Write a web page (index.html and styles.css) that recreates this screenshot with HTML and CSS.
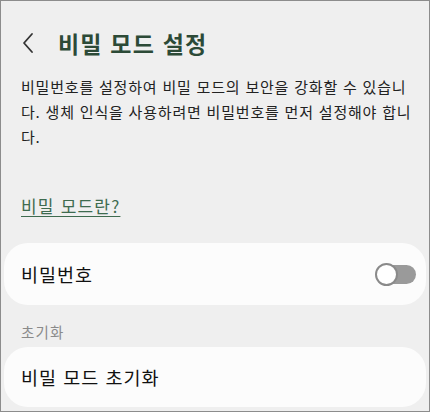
FILE: index.html
```html
<!DOCTYPE html>
<html lang="ko">
<head>
  <meta charset="UTF-8" />
  <title>비밀 모드 설정</title>
  <link rel="stylesheet" href="styles.css">
</head>
<body>
  <div class="screen">
    <!-- Header -->
    <div class="header">
      <svg class="back" width="14" height="22" viewBox="0 0 14 22">
        <path d="M11 2 L3 11 L11 20" fill="none" stroke="#333" stroke-width="1.8" stroke-linecap="round" stroke-linejoin="round" />
      </svg>
      <h1 class="title">비밀 모드 설정</h1>
    </div>

    <p class="desc">비밀번호를 설정하여 비밀 모드의 보안을 강화할 수 있습니다. 생체 인식을 사용하려면 비밀번호를 먼저 설정해야 합니다.</p>

    <a class="link" href="#">비밀 모드란?</a>

    <div class="card">
      <span class="cardText">비밀번호</span>
      <div class="toggle"><div class="knob"></div></div>
    </div>

    <div class="sectionLabel">초기화</div>

    <div class="card last">
      <span class="cardText">비밀 모드 초기화</span>
    </div>
  </div>
</body>
</html>
```

FILE: styles.css
```css
body {
  margin: 0;
  font-family: "Noto Sans CJK KR", "Noto Sans", sans-serif;
  background: #efefef;
}
.screen {
  width: 428px;
  height: 410px;
  border: 1px solid #8c8c8c;
  background: #efefef;
  overflow: hidden;
}
.header {
  display: flex;
  align-items: center;
  height: 32px;
  padding: 26px 0 0 20px;
}
.back {
  flex: none;
}
.title {
  margin: 0 0 0 23px;
  font-size: 23px;
  font-weight: bold;
  letter-spacing: 1.2px;
  color: #2c4a37;
  line-height: 32px;
}
.desc {
  margin: 15px 0 0;
  padding: 0 14px 0 20px;
  font-size: 15px;
  letter-spacing: 0.8px;
  line-height: 25px;
  color: #222;
  word-break: break-all;
}
.link {
  display: inline-block;
  margin: 45px 0 0 20px;
  font-size: 17px;
  letter-spacing: 1.2px;
  line-height: 24px;
  color: #3e6b4f;
  text-decoration: underline;
  text-underline-offset: 3px;
}
.card {
  display: flex;
  align-items: center;
  justify-content: space-between;
  height: 62px;
  margin: 25px 3px 0;
  padding: 0 10px 0 17px;
  background: #fcfcfc;
  border-radius: 24px;
}
.card.last {
  margin-top: 0;
  height: 60px;
}
.cardText {
  font-size: 18.5px;
  letter-spacing: 1px;
  color: #111;
}
.sectionLabel {
  padding: 17px 20px 5px;
  font-size: 14.5px;
  letter-spacing: 1.2px;
  line-height: 20px;
  color: #8a8a8a;
}
.toggle {
  position: relative;
  width: 40px;
  height: 19px;
  border-radius: 10px;
  background: #9a9a9a;
}
.knob {
  position: absolute;
  left: -1px;
  top: -2px;
  width: 19px;
  height: 19px;
  border: 2px solid #8a8a8a;
  border-radius: 50%;
  background: #fff;
}
```
